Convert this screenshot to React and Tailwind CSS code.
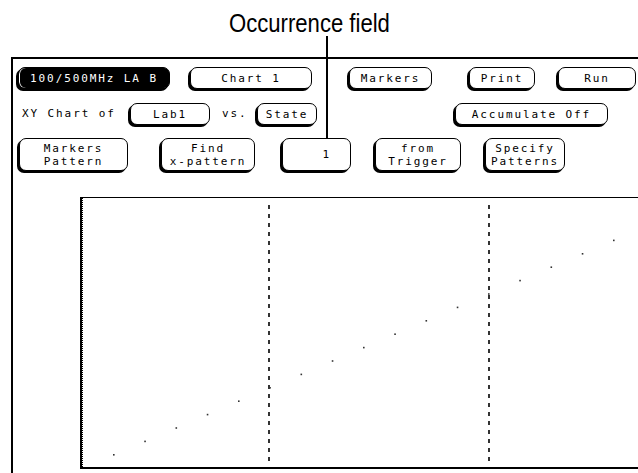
import React from 'react';

const mono = "font-['DejaVu_Sans_Mono','Liberation_Mono',monospace] text-[11px] tracking-[1.9px]";

function Key({ className = '', dark = false, children }) {
  return (
    <div
      className={`flex shrink-0 items-center justify-center rounded-[7px] border border-black text-center leading-[13px] shadow-[-2px_2px_0_#000] ${mono} ${
        dark ? 'bg-black text-white shadow-[inset_1px_0_0_#fff,-2px_2px_0_#000]' : 'bg-white text-black'
      } ${className}`}
    >
      {children}
    </div>
  );
}

function Chart() {
  const dots = [];
  for (let i = 0; i < 17; i++) {
    dots.push({ x: 113 + 31.25 * i - 82, y: 454 - 13.4 * i - 198 });
  }
  return (
    <svg width="600" height="270" className="block">
      <line x1="0.5" y1="0" x2="0.5" y2="270" stroke="#000" strokeWidth="1" strokeDasharray="1 1" />
      <line x1="187" y1="7" x2="187" y2="268" stroke="#000" strokeWidth="1.6" strokeDasharray="4 5" />
      <line x1="407" y1="7" x2="407" y2="268" stroke="#000" strokeWidth="1.6" strokeDasharray="4 5" />
      {dots.map((d, i) => (
        <rect key={i} x={d.x} y={d.y} width="1.6" height="1.6" fill="#333" />
      ))}
    </svg>
  );
}

export default function App() {
  return (
    <div className="relative flex h-[473px] w-[638px] flex-col overflow-hidden bg-white">
      {/* callout label */}
      <div className="h-[57px] shrink-0 pl-[229px] pt-[9px]">
        <div className="origin-left scale-x-[0.85] whitespace-nowrap font-['Liberation_Sans','Arial',sans-serif] text-[26px] leading-[28px] text-black">
          Occurrence field
        </div>
      </div>
      <div className="absolute left-[326px] top-[36px] h-[102px] w-[2px] bg-black" />

      {/* instrument frame */}
      <div className="ml-[11px] flex flex-1 flex-col border-l-2 border-t-2 border-black">
        <div className="ml-[5px] mt-[8px] flex h-[22px]">
          <Key dark className="w-[152px]">100/500MHz LA B</Key>
          <Key className="ml-[20px] w-[122px]">Chart 1</Key>
          <Key className="ml-[37px] w-[83px]">Markers</Key>
          <Key className="ml-[37px] w-[66px]">Print</Key>
          <Key className="ml-[23px] w-[78px]">Run</Key>
        </div>

        <div className="mt-[14px] flex h-[22px] items-center">
          <span className={`ml-[9px] w-[108px] ${mono}`}>XY Chart of</span>
          <Key className="h-full w-[80px]">Lab1</Key>
          <span className={`w-[47px] pl-[12px] ${mono}`}>vs.</span>
          <Key className="h-full w-[60px]">State</Key>
          <Key className="ml-[138px] h-full w-[153px]">Accumulate Off</Key>
        </div>

        <div className="ml-[6px] mt-[13px] flex h-[33px]">
          <Key className="w-[109px]">Markers<br />Pattern</Key>
          <Key className="ml-[33px] w-[94px]">Find<br />x-pattern</Key>
          <Key className="ml-[27px] w-[69px] !justify-end pr-[19px]">1</Key>
          <Key className="ml-[24px] w-[86px]">from<br />Trigger</Key>
          <Key className="ml-[24px] w-[80px]">Specify<br />Patterns</Key>
        </div>

        <div className="ml-[67px] mt-[26px] h-[272px] w-[600px] border-b-2 border-l-2 border-t border-black">
          <Chart />
        </div>
      </div>
    </div>
  );
}
